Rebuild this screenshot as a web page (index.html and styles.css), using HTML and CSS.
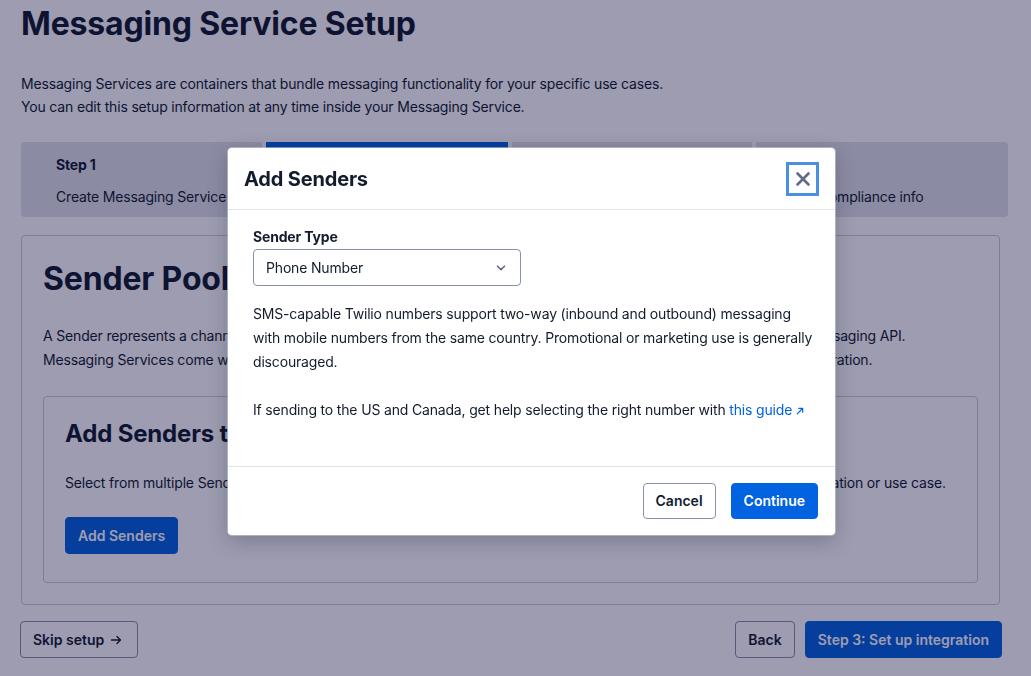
FILE: index.html
```html
<!DOCTYPE html>
<html lang="en">
<head>
  <meta charset="UTF-8">
  <meta name="viewport" content="width=device-width, initial-scale=1.0">
  <title>Messaging Service Setup</title>
  <link rel="stylesheet" href="styles.css">
</head>
<body>
  <div class="page">
    <h1 class="page-title">Messaging Service Setup</h1>
    <p class="intro">Messaging Services are containers that bundle messaging functionality for your specific use cases.<br>You can edit this setup information at any time inside your Messaging Service.</p>

    <div class="steps">
      <div class="step step-first">
        <div class="step-num">Step 1</div>
        <div class="step-name">Create Messaging Service</div>
      </div>
      <div class="step step-active">
        <div class="step-num">Step 2</div>
        <div class="step-name">Add Senders</div>
      </div>
      <div class="step">
        <div class="step-num">Step 3</div>
        <div class="step-name">Set up integration</div>
      </div>
      <div class="step step-last">
        <div class="step-num">Step 4</div>
        <div class="step-name">Add compliance info</div>
      </div>
    </div>

    <div class="card">
      <h2 class="card-title">Sender Pool</h2>
      <p class="card-text">A Sender represents a channel, such as a phone number or a short code, that you can use to send messages with the Messaging API.<br>Messaging Services come with a Sender Pool, so you can add several Senders to a service and scale your messaging operation.</p>
      <div class="inner-card">
        <h3 class="inner-title">Add Senders to Sender Pool</h3>
        <p class="inner-text">Select from multiple Sender types to add to the Sender Pool. Add as many Senders as you need depending on your location or use case.</p>
        <button class="btn btn-primary">Add Senders</button>
      </div>
    </div>

    <div class="bottom-row">
      <button class="btn btn-secondary btn-skip">Skip setup
        <svg width="16" height="16" viewBox="0 0 16 16"><path d="M3.5 8h9M9 4.5 12.5 8 9 11.5" fill="none" stroke="currentColor" stroke-width="1.3" stroke-linecap="round" stroke-linejoin="round"/></svg>
      </button>
      <div class="bottom-right">
        <button class="btn btn-secondary">Back</button>
        <button class="btn btn-primary">Step 3: Set up integration</button>
      </div>
    </div>
  </div>

  <div class="overlay"></div>

  <div class="modal">
    <div class="modal-header">
      <h2 class="modal-title">Add Senders</h2>
      <button class="close-btn" aria-label="Close">
        <svg width="16" height="16" viewBox="0 0 16 16"><path d="M2.5 2.5l11 11M13.5 2.5l-11 11" stroke="#606b85" stroke-width="2.6" stroke-linecap="round"/></svg>
      </button>
    </div>
    <div class="modal-body">
      <label class="field-label">Sender Type</label>
      <div class="select">
        <span>Phone Number</span>
        <svg width="10" height="6" viewBox="0 0 10 6"><path d="M1.5 1.2 5 4.6l3.5-3.4" fill="none" stroke="#606b85" stroke-width="1.6" stroke-linecap="round" stroke-linejoin="round"/></svg>
      </div>
      <p class="modal-text">SMS-capable Twilio numbers support two-way (inbound and outbound) messaging with mobile numbers from the same country. Promotional or marketing use is generally discouraged.</p>
      <p class="modal-text modal-text-last">If sending to the US and Canada, get help selecting the right number with <a class="link" href="#">this guide&nbsp;<svg width="8" height="8" viewBox="0 0 8 8"><path d="M1.2 6.8 6.5 1.5M2.8 1.3h3.9v3.9" fill="none" stroke="currentColor" stroke-width="1.2" stroke-linecap="round" stroke-linejoin="round"/></svg></a></p>
    </div>
    <div class="modal-footer">
      <button class="btn btn-secondary btn-sm">Cancel</button>
      <button class="btn btn-primary btn-sm">Continue</button>
    </div>
  </div>
</body>
</html>
```

FILE: styles.css
```css
* {
  box-sizing: border-box;
}
body {
  margin: 0;
  font-family: Inter, "Noto Sans", sans-serif;
  font-size: 14px;
  letter-spacing: -0.17px;
  color: #121c2d;
  background-color: #fff;
}
.page {
  padding: 4px 23px 20px 21px;
}
.page-title {
  margin: 0;
  font-size: 32px;
  line-height: 40px;
  font-weight: 700;
}
.intro {
  margin: 28px 0 0;
  line-height: 23px;
}

/* steps */
.steps {
  margin-top: 24px;
  display: grid;
  grid-template-columns: 241px 242px 240px 1fr;
  gap: 4px;
  height: 75px;
}
.step {
  background-color: #e1e3ea;
  padding: 13px 0 0 35px;
}
.step-first {
  border-radius: 4px 0 0 4px;
}
.step-last {
  border-radius: 0 4px 4px 0;
}
.step-active {
  background-color: #0263e0;
  color: #fff;
}
.step-num {
  font-weight: 700;
  line-height: 20px;
}
.step-name {
  margin-top: 12px;
  line-height: 20px;
}

/* card */
.card {
  margin: 18px 8px 0 0;
  border: 1px solid #cacdd8;
  border-radius: 4px;
  padding: 23px 21px 21px;
}
.card-title {
  margin: 0;
  font-size: 32px;
  line-height: 40px;
  font-weight: 700;
}
.card-text {
  margin: 25px 0 0;
  line-height: 24px;
  white-space: nowrap;
}
.inner-card {
  margin-top: 24px;
  border: 1px solid #cacdd8;
  border-radius: 4px;
  padding: 21px 21px 28px;
}
.inner-title {
  margin: 0;
  font-size: 24px;
  line-height: 32px;
  font-weight: 700;
}
.inner-text {
  margin: 21px 0 22px;
  line-height: 24px;
  white-space: nowrap;
}

/* buttons */
.btn {
  font-family: inherit;
  font-size: 14px;
  font-weight: 600;
  letter-spacing: normal;
  line-height: 20px;
  height: 37px;
  padding: 0 12px;
  border-radius: 4px;
  border: 1px solid #8891aa;
  cursor: pointer;
}
.btn-primary {
  background-color: #0263e0;
  border-color: #0263e0;
  color: #fff;
}
.btn-secondary {
  background-color: #fff;
  color: #121c2d;
}
.btn-sm {
  height: 36px;
}
.btn-skip {
  display: inline-flex;
  align-items: center;
  gap: 4px;
  padding-right: 13px;
}
.bottom-row {
  margin: 16px 6px 0 -1px;
  display: flex;
  justify-content: space-between;
}
.bottom-right {
  display: flex;
  gap: 10px;
}

/* modal */
.overlay {
  position: fixed;
  inset: 0;
  background-color: rgba(10, 8, 57, 0.4);
}
.modal {
  position: absolute;
  left: 228px;
  top: 148px;
  width: 607px;
  background-color: #fff;
  border-radius: 4px;
  box-shadow: 0 0 0 1px rgba(202, 205, 216, 0.6), 0 6px 20px rgba(18, 28, 45, 0.25);
}
.modal-header {
  display: flex;
  justify-content: space-between;
  align-items: center;
  padding: 14px 16px 13px;
  border-bottom: 1px solid #e1e3ea;
}
.modal-title {
  margin: 0;
  font-size: 20px;
  line-height: 28px;
  font-weight: 700;
}
.close-btn {
  width: 33px;
  height: 34px;
  padding: 0;
  border: 3px solid #4a90e2;
  background-color: #fff;
  display: flex;
  align-items: center;
  justify-content: center;
  cursor: pointer;
}
.modal-body {
  padding: 17px 18px 20px 25px;
}
.field-label {
  display: block;
  font-weight: 700;
  line-height: 20px;
  margin-bottom: 2px;
}
.select {
  width: 268px;
  height: 37px;
  border: 1px solid #8891aa;
  border-radius: 4px;
  display: flex;
  align-items: center;
  justify-content: space-between;
  padding: 0 14px 0 12px;
}
.modal-text {
  margin: 16px 0 24px;
  line-height: 24px;
}
.modal-text-last {
  margin-top: 0;
}
.link {
  color: #0263e0;
  text-decoration: none;
}
.modal-footer {
  border-top: 1px solid #e1e3ea;
  padding: 16px 17px 16px 16px;
  display: flex;
  justify-content: flex-end;
  gap: 15px;
}
```
